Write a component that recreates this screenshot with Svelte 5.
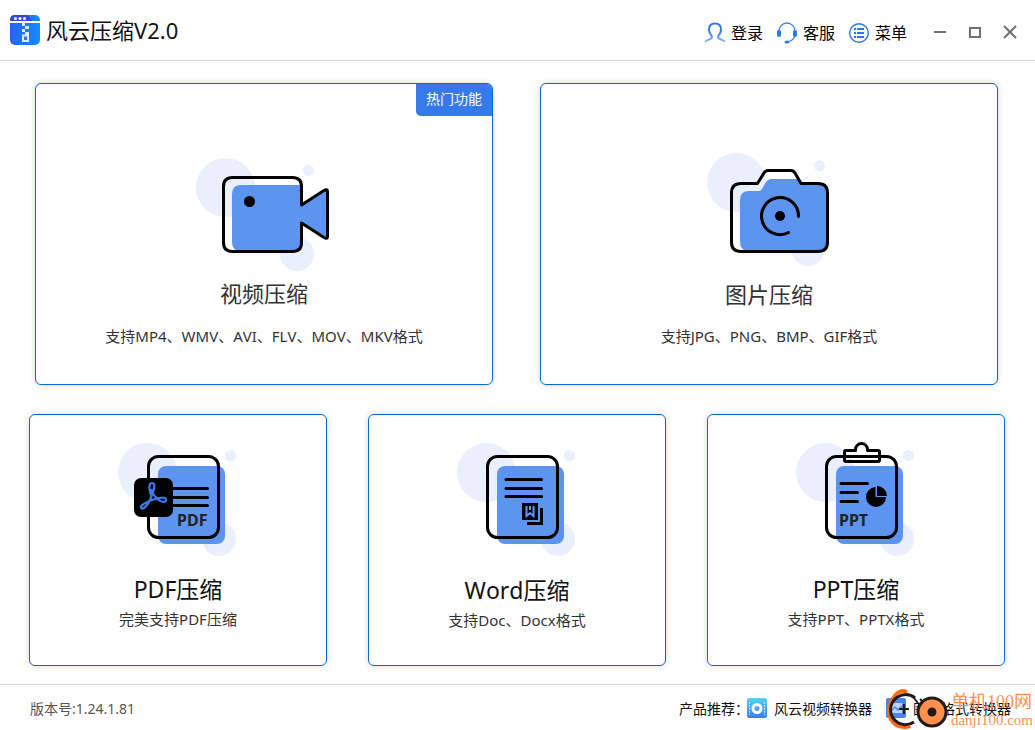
<script>
  const featured = [
    { kind: 'video', title: '视频压缩', note: '支持MP4、WMV、AVI、FLV、MOV、MKV格式', hot: true, width: 152 },
    { kind: 'image', title: '图片压缩', note: '支持JPG、PNG、BMP、GIF格式', hot: false, width: 140 }
  ];
  const documents = [
    { kind: 'pdf', title: 'PDF压缩', note: '完美支持PDF压缩' },
    { kind: 'word', title: 'Word压缩', note: '支持Doc、Docx格式' },
    { kind: 'ppt', title: 'PPT压缩', note: '支持PPT、PPTX格式' }
  ];
</script>

{#snippet art(kind, width)}
  <svg class="art" {width} height="122" viewBox="0 0 {width} 122" fill="none" stroke-linecap="round" stroke-linejoin="round" aria-hidden="true">
    <g fill="#e9effd">
      <circle cx="37.5" cy="37.5" r="29.5" />
      <circle cx="120.5" cy="20.5" r="5.5" />
      <circle cx="109" cy="104" r="17" />
    </g>
    {#if kind === 'video'}
      <path class="tint" d="M53 35H113V92Q113 101 104 101H53Q44 101 44 92V44Q44 35 53 35Z" />
      <path class="tint" d="M113 56L139 40V88L113 72Z" />
      <path class="line" d="M113.5 55V36.500Q113.500 27.500 104.500 27.500H44.500Q35.500 27.500 35.500 36.500V92.500Q35.500 101.500 44.500 101.500H104.500Q113.500 101.500 113.500 92.500V73L136 87.500Q139.500 89.500 139.500 86.500V41.500Q139.500 38.500 136 40.500Z" />
      <circle cx="61.5" cy="51.5" r="5.5" fill="#000" />
    {:else if kind === 'image'}
      <path class="tint" d="M50 46H60Q62 46 63 44L67 37Q69 34 73 34H98L102 39H119Q128 39 128 48V97Q128 106 119 106H50Q41 106 41 97V55Q41 46 50 46Z" />
      <path class="line" d="M42 38.5H58.5L65 28Q66.5 25.5 69 25.5H92Q94.5 25.5 96 28L102 38.5H119Q128.5 38.5 128.5 48V97Q128.5 106.5 119 106.5H42Q32.5 106.5 32.5 97V48Q32.5 38.5 42 38.5Z" />
      <path class="line" d="M99.5 71.5A18.5 18.5 0 1 0 89.5 87.5" />
      <circle cx="81" cy="71" r="5" fill="#000" />
    {:else}
      <rect class="tint" x="48" y="31" width="67" height="78" rx="8" />
      <rect class="line" x="38.5" y="21.5" width="70" height="81" rx="10" />
    {/if}
    {#if kind === 'pdf'}
      <path class="line" d="M63 53.5H97.5M63 62.5H97.5M63 70.5H97.5" />
      <rect x="24" y="43" width="39" height="39" rx="7" fill="#000" />
      <path stroke="#3b7bea" stroke-width="2.2" d="M41 60C38.500 52 39 48 42 48C45 48 45 52 43 57C41 64 37 71 34 73C31 75 29.500 72 33 69.500C36 67 43 64.500 49 63C54 62 57 63 56 65.500C55 68 49 66.500 46 62.500Q43 59.500 41.500 55" />
      <text class="label" x="67" y="91">PDF</text>
    {:else if kind === 'word'}
      <path class="line" d="M57 44.5H92.5M57 53.5H92.5M57 61.5H92.5" />
      <rect x="73" y="68" width="16" height="17" fill="#000" />
      <path d="M77.500 71V81L81 78L84.500 81V71M81 71V75" stroke="#5f96f0" stroke-width="2" stroke-linecap="butt" stroke-linejoin="miter" />
      <path d="M92.5 73V88.5H78" stroke="#000" stroke-width="3" stroke-linecap="butt" stroke-linejoin="miter" />
    {:else if kind === 'ppt'}
      <path class="line" d="M53 48.5H79.5M53 57.5H69.5M53 66.5H69.5" />
      <path fill="#000" d="M87.500 52A10 10 0 1 0 98 62H87.500Z" />
      <path fill="#000" d="M89 51A10 10 0 0 1 99 61H89Z" />
      <text class="label" x="51" y="91">PPT</text>
      <path class="line" d="M58 15.5H67.5V14.5A5.500 5.500 0 0 1 79.5 14.5V15.5H90Q91.5 15.5 91.5 17V25Q91.5 26.5 90 26.5H58Q56.5 26.5 56.5 25V17Q56.5 15.5 58 15.5Z" />
    {/if}
  </svg>
{/snippet}

<div class="app">
  <header>
    <div class="brand">
      <svg width="30" height="30" viewBox="0 0 30 30" aria-hidden="true">
        <defs>
          <linearGradient id="brand-fill" x1="0" x2="1"><stop offset="0" stop-color="#2764ea" /><stop offset="1" stop-color="#138dff" /></linearGradient>
        </defs>
        <rect width="30" height="30" rx="5" fill="url(#brand-fill)" />
        <path d="M0 6V5Q0 0 5 0H18L22 6Z" fill="#3349d8" />
        <path d="M0 6H30V8H0Z" fill="#fff" />
        <g fill="#fff"><circle cx="5.5" cy="3.5" r="1.5" /><circle cx="10" cy="3.5" r="1.5" /><circle cx="14.5" cy="3.5" r="1.5" /></g>
        <path d="M12 8h3v3h-3zM15 11h4v3h-4zM12 14h3v3h-3zM15 17h4v3h-4z" fill="#e3eaff" />
        <path d="M13 20.5H18V26H13Z" fill="#3c73e9" stroke="#e3eaff" stroke-width="2" />
      </svg>
      <h1>风云压缩V2.0</h1>
    </div>
    <nav>
      <button class="action">
        <svg width="22" height="22" viewBox="0 0 22 22" fill="none" aria-hidden="true">
          <defs><linearGradient id="user-line" x2="0" y2="1"><stop offset="0.4" stop-color="#2d79ee" /><stop offset="1" stop-color="#8bb5fa" /></linearGradient></defs>
          <path d="M1 20C3 17.5 8 17.5 8 15C8 13.5 5 12 5 7.5C5 3.5 7.5 1.5 11 1.5S17 3.5 17 7.5C17 12 14 13.5 14 15C14 17.5 19 17.5 21 20" stroke="url(#user-line)" stroke-width="2" />
        </svg>
        登录
      </button>
      <button class="action">
        <svg width="22" height="22" viewBox="0 0 22 22" fill="none" aria-hidden="true">
          <path d="M3 9A8 8 0 0 1 19 9M19 14Q17 19 11 20" stroke="#3f83f2" stroke-width="1.3" />
          <rect x="1" y="8" width="4" height="7" rx="2" fill="#2878f0" /><rect x="17" y="8" width="4" height="7" rx="2" fill="#2878f0" />
          <ellipse cx="11" cy="20" rx="2.5" ry="1.5" fill="#2878f0" />
        </svg>
        客服
      </button>
      <button class="action">
        <svg width="22" height="22" viewBox="0 0 22 22" fill="none" stroke="#2878f0" aria-hidden="true">
          <circle cx="11" cy="11" r="9.3" stroke-width="1.4" />
          <path d="M6 7H8M9 7H16M6 11H8M9 11H16M6 15H8M9 15H16" stroke-width="1.800" />
        </svg>
        菜单
      </button>
      <div class="window">
        <button aria-label="最小化"><svg width="14" height="14" viewBox="0 0 14 14"><path d="M1 6H13" /></svg></button>
        <button aria-label="最大化"><svg width="14" height="14" viewBox="0 0 14 14"><path d="M2 2H12V11H2Z" /></svg></button>
        <button aria-label="关闭"><svg width="14" height="14" viewBox="0 0 14 14"><path d="M1 0L13 12M13 0L1 12" /></svg></button>
      </div>
    </nav>
  </header>

  <main>
    <div class="featured">
      {#each featured as item}
        <button class="card large {item.kind}">
          {#if item.hot}<span class="badge">热门功能</span>{/if}
          {@render art(item.kind, item.width)}
          <span class="title">{item.title}</span>
          <span class="note">{item.note}</span>
        </button>
      {/each}
    </div>
    <div class="documents">
      {#each documents as item}
        <button class="card small {item.kind}">
          {@render art(item.kind, 136)}
          <span class="title">{item.title}</span>
          <span class="note">{item.note}</span>
        </button>
      {/each}
    </div>
  </main>

  <footer>
    <span class="version">版本号:1.24.1.81</span>
    <div class="products">
      <span>产品推荐：</span>
      <a href="#video-converter">
        <svg width="20" height="20" viewBox="0 0 20 20" aria-hidden="true">
          <defs><linearGradient id="video-fill" x2="0" y2="1"><stop offset="0" stop-color="#55d4f8" /><stop offset="1" stop-color="#3d7cec" /></linearGradient></defs>
          <rect width="20" height="20" rx="2" fill="url(#video-fill)" />
          <path d="M2.5 4V17M17.5 4V17" stroke="#b9eafa" stroke-dasharray="2 1" />
          <circle cx="10" cy="10.5" r="4" fill="none" stroke="#fff" stroke-width="3" />
        </svg>
        风云视频转换器
      </a>
      <a href="#image-converter">
        <svg width="20" height="20" viewBox="0 0 20 20" aria-hidden="true">
          <rect width="20" height="20" rx="2" fill="#4c86ec" />
          <rect x="5" y="5" width="11" height="10" fill="#bcd6ff" />
          <path d="M5 13L9 9L12 12L16 8" fill="none" stroke="#4c86ec" stroke-width="1.5" />
        </svg>
        图片格式转换器
      </a>
    </div>
    <div class="stamp">
      <svg width="66" height="44" viewBox="0 0 66 44" fill="none" aria-hidden="true">
        <path d="M22 2C17 -1 11 3 8 7C4 12 2 17 2 23C2 34 11 44 26 40L25 37C13 40 5 32 5 22C5 12 12 4 22 5Q23 3 22 2Z" fill="#ff6c0a" />
        <path d="M30 10A15 15 0 1 0 29 34" stroke="#231b19" stroke-width="3" />
        <path d="M14 21H24M19 16V26M29 10L36 19M35 11L40 16" stroke="#231b19" stroke-width="2" />
        <circle cx="47" cy="24" r="14" fill="#ff914d" stroke="#231b19" stroke-width="3" />
        <circle cx="47" cy="24" r="4.5" fill="#231b19" />
      </svg>
      <span class="words"><b>单机100网</b><i>danji100.com</i></span>
    </div>
  </footer>
</div>

<style>
  :global(body) { margin: 0; background: #fff; }
  .app { min-height: 100vh; display: flex; flex-direction: column; color: #222; font-family: "Noto Sans", "Noto Sans CJK SC", sans-serif; font-kerning: none; }
  button { box-sizing: border-box; border: 0; padding: 0; background: none; font: inherit; font-kerning: none; color: inherit; }
  svg { display: block; flex: none; }
  header { height: 60px; display: flex; align-items: center; justify-content: space-between; border-bottom: 1px solid #d9d9d9; padding: 0 18px 0 10px; }
  .brand { display: flex; align-items: center; gap: 6px; }
  h1 { margin: 0; font-size: 22px; line-height: 30px; font-weight: 400; color: #111; }
  nav { display: flex; align-items: center; gap: 13px; padding-top: 6px; }
  .action { display: flex; align-items: center; gap: 5px; font-size: 16px; line-height: 24px; color: #000; }
  .window { display: flex; gap: 21px; padding-left: 13px; }
  .window svg { overflow: visible; }
  .window path { fill: none; stroke: #746d7d; stroke-width: 2; }
  main { flex: 1; display: flex; flex-direction: column; gap: 29px; padding: 22px 30px 18px 29px; }
  .featured { flex: 302 0 0px; display: grid; grid-template-columns: 1fr 1fr; gap: 47px; padding: 0 7px 0 6px; }
  .documents { flex: 252 0 0px; display: grid; grid-template-columns: repeat(3, 1fr); gap: 41px; }
  .card { position: relative; display: flex; flex-direction: column; align-items: center; border: 1px solid #0a66d0; border-radius: 6px; background: #fff; box-shadow: 0 0 6px rgba(0, 0, 0, 0.16); }
  .large { padding-top: 66px; }
  .large.image { padding-top: 61px; }
  .small { padding: 20px 0 16px; }
  .title { color: #333; font-size: 22px; line-height: 32px; }
  .note { color: #333; font-size: 15px; line-height: 22px; }
  .video .title { margin-top: 5px; }
  .image .title { margin-top: 11px; }
  .large .note { margin-top: 16px; }
  .image .note { margin-top: 15px; }
  .small .title { color: #111; font-size: 23px; margin-top: 16px; }
  .small .note { margin-top: 3px; }
  .small.word .title { margin-top: 17px; }
  .badge { position: absolute; top: 0; right: 0; width: 76px; box-sizing: border-box; padding-bottom: 2px; line-height: 30px; background: #3679eb; border-radius: 0 5px 0 5px; color: #fff; font-size: 14px; }
  .tint { fill: #4b88ee; fill-opacity: 0.9; }
  .line { stroke: #000; stroke-width: 3; }
  .label { fill: #222; font-family: "Noto Sans", sans-serif; font-weight: 700; font-size: 16px; }
  footer { position: relative; box-sizing: border-box; height: 46px; display: flex; align-items: center; justify-content: space-between; border-top: 1px solid #d9d9d9; padding: 0 24px 0 30px; font-size: 14px; color: #111; }
  .version { color: #555; }
  .products, .products a { display: flex; align-items: center; }
  .products { gap: 14px; }
  .products > span { margin-right: -16px; }
  .products a { gap: 7px; color: inherit; text-decoration: none; }
  .stamp { position: absolute; right: 2px; top: 3px; display: flex; align-items: center; color: #ff914d; font-family: "Liberation Serif", "Noto Sans CJK SC", serif; }
  .words { display: flex; flex-direction: column; white-space: nowrap; }
  .words b { font-weight: 400; font-size: 18px; line-height: 20px; }
  .words i { font-style: normal; font-size: 15px; line-height: 16px; }
</style>
